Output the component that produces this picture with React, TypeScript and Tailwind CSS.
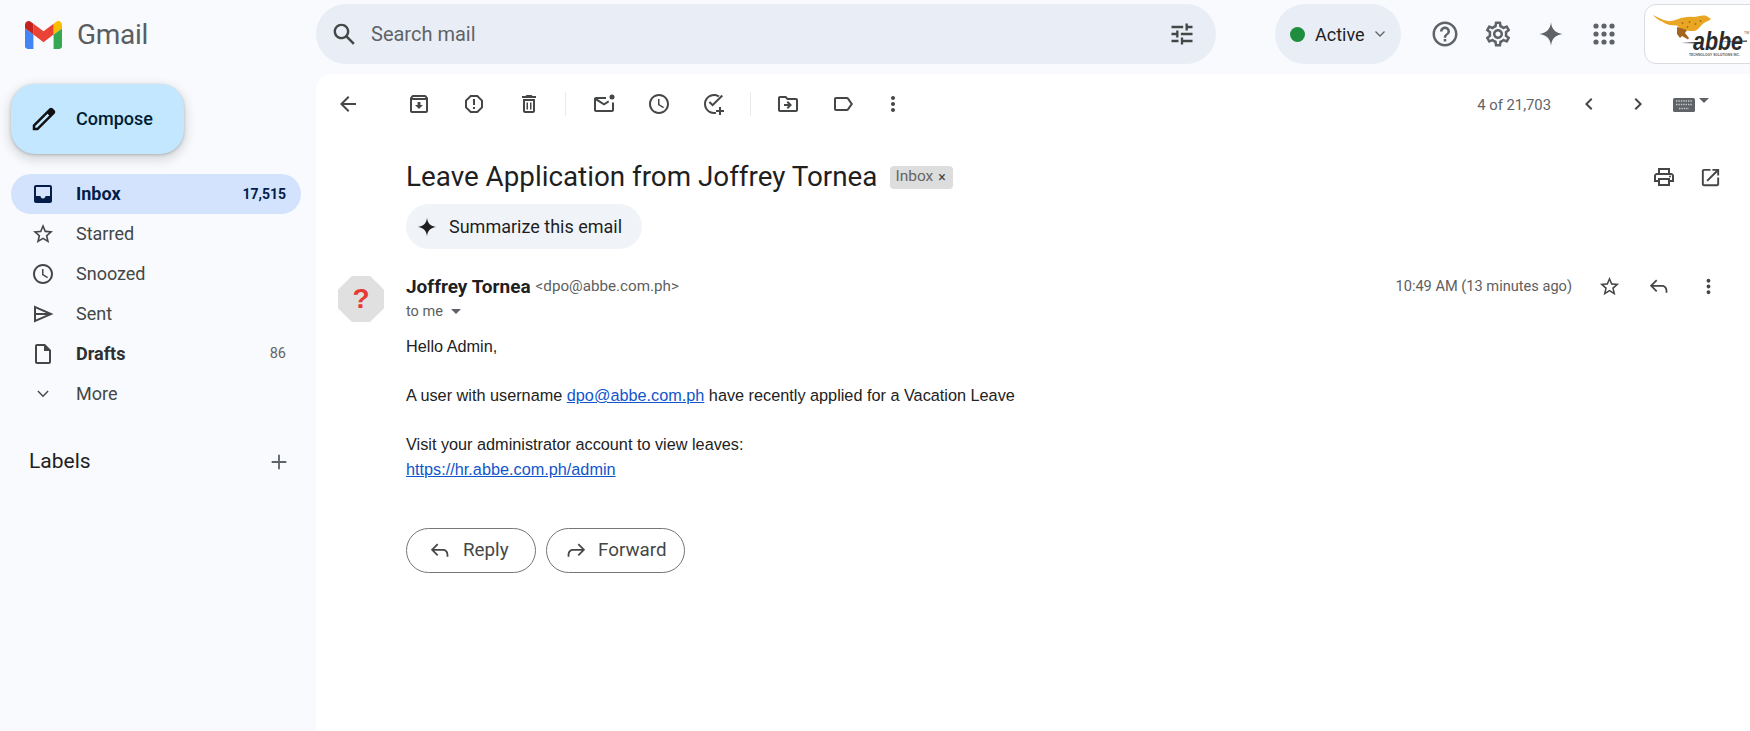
import React from "react";

const roboto = "font-['Roboto',sans-serif]";

function Icon({ d, size = 24, className = "" }: { d: string; size?: number; className?: string }) {
	return (
		<svg width={size} height={size} viewBox="0 0 24 24" fill="currentColor" className={className}>
			<path d={d} />
		</svg>
	);
}

const paths = {
	search: "M20.49 19l-5.73-5.73C15.53 12.2 16 10.91 16 9.5 16 5.91 13.09 3 9.5 3S3 5.91 3 9.5 5.91 16 9.5 16c1.41 0 2.7-.47 3.77-1.24L19 20.49 20.49 19zM5 9.5C5 7.01 7.01 5 9.5 5S14 7.01 14 9.5 11.99 14 9.5 14 5 11.99 5 9.5z",
	tune: "M3 17v2h6v-2H3zM3 5v2h10V5H3zm10 16v-2h8v-2h-8v-2h-2v6h2zM7 9v2H3v2h4v2h2V9H7zm14 4v-2H11v2h10zm-6-4h2V7h4V5h-4V3h-2v6z",
	help: "M11 18h2v-2h-2v2zm1-16C6.48 2 2 6.48 2 12s4.48 10 10 10 10-4.48 10-10S17.52 2 12 2zm0 18c-4.41 0-8-3.59-8-8s3.59-8 8-8 8 3.59 8 8-3.59 8-8 8zm0-14c-2.21 0-4 1.79-4 4h2c0-1.1.9-2 2-2s2 .9 2 2c0 2-3 1.75-3 5h2c0-2.25 3-2.5 3-5 0-2.21-1.79-4-4-4z",
	gear: "M19.43 12.98c.04-.32.07-.64.07-.98 0-.34-.03-.66-.07-.98l2.11-1.65c.19-.15.24-.42.12-.64l-2-3.46c-.09-.16-.26-.25-.44-.25-.06 0-.12.01-.17.03l-2.49 1c-.52-.4-1.08-.73-1.69-.98l-.38-2.65C14.46 2.18 14.25 2 14 2h-4c-.25 0-.46.18-.49.42l-.38 2.65c-.61.25-1.17.59-1.69.98l-2.49-1c-.06-.02-.12-.03-.18-.03-.17 0-.34.09-.43.25l-2 3.46c-.13.22-.07.49.12.64l2.11 1.65c-.04.32-.07.65-.07.98 0 .33.03.66.07.98l-2.11 1.65c-.19.15-.24.42-.12.64l2 3.46c.09.16.26.25.44.25.06 0 .12-.01.17-.03l2.49-1c.52.4 1.08.73 1.69.98l.38 2.65c.03.24.24.42.49.42h4c.25 0 .46-.18.49-.42l.38-2.65c.61-.25 1.17-.59 1.69-.98l2.49 1c.06.02.12.03.18.03.17 0 .34-.09.43-.25l2-3.46c.12-.22.07-.49-.12-.64l-2.11-1.65zm-1.98-1.71c.04.31.05.52.05.73 0 .21-.02.43-.05.73l-.14 1.13.89.7 1.08.84-.7 1.21-1.27-.51-1.04-.42-.9.68c-.43.32-.84.56-1.25.73l-1.06.43-.16 1.13-.2 1.35h-1.4l-.19-1.35-.16-1.13-1.06-.43c-.43-.18-.83-.41-1.23-.71l-.91-.7-1.06.43-1.27.51-.7-1.21 1.08-.84.89-.7-.14-1.13c-.03-.31-.05-.54-.05-.74s.02-.43.05-.73l.14-1.13-.89-.7-1.08-.84.7-1.21 1.27.51 1.04.42.9-.68c.43-.32.84-.56 1.25-.73l1.06-.43.16-1.13.2-1.35h1.39l.19 1.35.16 1.13 1.06.43c.43.18.83.41 1.23.71l.91.7 1.06-.43 1.27-.51.7 1.21-1.07.85-.89.7.14 1.13zM12 8c-2.21 0-4 1.79-4 4s1.79 4 4 4 4-1.79 4-4-1.79-4-4-4zm0 6c-1.1 0-2-.9-2-2s.9-2 2-2 2 .9 2 2-.9 2-2 2z",
	spark: "M12 2C12.6 8 16 11.4 22 12 16 12.6 12.6 16 12 22 11.4 16 8 12.6 2 12 8 11.4 11.4 8 12 2Z",
	back: "M20 11H7.83l5.59-5.59L12 4l-8 8 8 8 1.41-1.41L7.83 13H20v-2z",
	archive: "M20.54 5.23l-1.39-1.68C18.88 3.21 18.47 3 18 3H6c-.47 0-.88.21-1.16.55L3.46 5.23C3.17 5.57 3 6.02 3 6.5V19c0 1.1.9 2 2 2h14c1.1 0 2-.9 2-2V6.5c0-.48-.17-.93-.46-1.27zM6.24 5h11.52l.81.97H5.44l.8-.97zM5 19V8h14v11H5zm8.45-9h-2.9v3H8l4 4 4-4h-2.55z",
	report: "M15.73 3H8.27L3 8.27v7.46L8.27 21h7.46L21 15.73V8.27L15.73 3zM19 14.9L14.9 19H9.1L5 14.9V9.1L9.1 5h5.8L19 9.1v5.8zM11 7h2v6h-2zM11 15h2v2h-2z",
	trash: "M6 19c0 1.1.9 2 2 2h8c1.1 0 2-.9 2-2V7H6v12zM8 9h8v10H8V9zm7.5-5l-1-1h-5l-1 1H5v2h14V4h-3.5zM9.5 10.5h1.5v7H9.5zM13 10.5h1.5v7H13z",
	unread: "M14 5H4c-1.1 0-2 .9-2 2v11c0 1.1.9 2 2 2h16c1.1 0 2-.9 2-2v-7.5h-2V18H4V8.5l8 5 5.2-3.3-1-1.6L12 11.2 5.6 7H14V5zM20 2.5a2.5 2.5 0 1 1 0 5 2.5 2.5 0 0 1 0-5z",
	clock: "M11.99 2C6.47 2 2 6.48 2 12s4.47 10 9.99 10C17.52 22 22 17.52 22 12S17.52 2 11.99 2zM12 20c-4.42 0-8-3.58-8-8s3.58-8 8-8 8 3.58 8 8-3.58 8-8 8zM12.5 7H11v6l5.25 3.15.75-1.23-4.5-2.67z",
	task: "M21 4.2L10.6 14.6l-3.9-3.9 1.4-1.4 2.5 2.5 9-9L21 4.2zM12 20c-4.42 0-8-3.58-8-8s3.58-8 8-8c1.5 0 2.9.42 4.1 1.14l1.45-1.45C16 2.63 14.08 2 12 2 6.48 2 2 6.48 2 12s4.48 10 10 10c.7 0 1.38-.07 2-.2v-2.07c-.63.17-1.3.27-2 .27zM19 15h-2v3h-3v2h3v3h2v-3h3v-2h-3v-3z",
	folder: "M20 6h-8l-2-2H4c-1.1 0-1.99.9-1.99 2L2 18c0 1.1.9 2 2 2h16c1.1 0 2-.9 2-2V8c0-1.1-.9-2-2-2zm0 12H4V6h5.17l2 2H20v10zM12.16 12H8v2h4.16l-1.59 1.59L11.99 17 16 13l-4.01-4-1.42 1.41z",
	label: "M17.63 5.84C17.27 5.33 16.67 5 16 5L5 5.01C3.9 5.01 3 5.9 3 7v10c0 1.1.9 1.99 2 1.99L16 19c.67 0 1.27-.33 1.63-.84L22 12l-4.37-6.16zM16 17H5V7h11l3.55 5L16 17z",
	more: "M12 8c1.1 0 2-.9 2-2s-.9-2-2-2-2 .9-2 2 .9 2 2 2zm0 2c-1.1 0-2 .9-2 2s.9 2 2 2 2-.9 2-2-.9-2-2-2zm0 6c-1.1 0-2 .9-2 2s.9 2 2 2 2-.9 2-2-.9-2-2-2z",
	print: "M19 8h-1V3H6v5H5c-1.66 0-3 1.34-3 3v6h4v4h12v-4h4v-6c0-1.66-1.34-3-3-3zM8 5h8v3H8V5zm8 12v2H8v-4h8v2zm2-2v-2H6v2H4v-4c0-.55.45-1 1-1h14c.55 0 1 .45 1 1v4h-2zM18 10.5a1 1 0 1 1 0 2 1 1 0 0 1 0-2z",
	open: "M19 19H5V5h7V3H5c-1.11 0-2 .9-2 2v14c0 1.1.89 2 2 2h14c1.1 0 2-.9 2-2v-7h-2v7zM14 3v2h3.59l-9.83 9.83 1.41 1.41L19 6.41V10h2V3h-7z",
	prev: "M15.41 7.41L14 6l-6 6 6 6 1.41-1.41L10.83 12z",
	next: "M10 6L8.59 7.41 13.17 12l-4.58 4.59L10 18l6-6z",
	star: "M22 9.24l-7.19-.62L12 2 9.19 8.63 2 9.24l5.46 4.73L5.82 21 12 17.27 18.18 21l-1.63-7.03L22 9.24zM12 15.4l-3.76 2.27 1-4.28-3.32-2.88 4.38-.38L12 6.1l1.71 4.04 4.38.38-3.32 2.88 1 4.28L12 15.4z",
	inbox: "M19 3H5c-1.1 0-2 .9-2 2v14c0 1.1.9 2 2 2h14c1.1 0 2-.9 2-2V5c0-1.1-.9-2-2-2zm0 11h-4.5c0 1.4-1.1 2.5-2.5 2.5S9.5 15.4 9.5 14H5V5h14v9z",
	draft: "M14 2H6c-1.1 0-2 .9-2 2v16c0 1.1.9 2 2 2h12c1.1 0 2-.9 2-2V8l-6-6zM6 20V4h7v5h5v11H6z",
	plus: "M20 13h-7v7h-2v-7H4v-2h7V4h2v7h7v2z",
	pencil: "M20.41 4.94l-1.35-1.35c-.78-.78-2.05-.78-2.83 0L3 16.82V21h4.18L20.41 7.77c.79-.78.79-2.05 0-2.83zm-14 14.12L5 19v-1.36l9.82-9.82 1.41 1.41-9.82 9.83z",
	reply: "M9.5 5.5 3.8 11.2l5.7 5.7-1.4 1.4L1 11.2 8.1 4.1l1.4 1.4zM3 10.2h12c3.6 0 6 2.8 6 6.8v2h-2v-2c0-2.9-1.6-4.8-4-4.8H3v-2z",
	forward: "M14.5 5.5l5.7 5.7-5.7 5.7 1.4 1.4 7.1-7.1-7.1-7.1-1.4 1.4zM21 10.2H9c-3.6 0-6 2.8-6 6.8v2h2v-2c0-2.9 1.6-4.8 4-4.8h12v-2z",
	send: "M3 3.5 22.5 12 3 20.5V3.5zM5 6.6v4.4h10.2L5 6.6zm0 6.4v4.4L15.2 13H5z",
};

function GmailLogo() {
	return (
		<svg width="37" height="28" viewBox="52 42 88 66">
			<path fill="#4285f4" d="M58 108h14V74L52 59v43c0 3.32 2.69 6 6 6" />
			<path fill="#34a853" d="M120 108h14c3.32 0 6-2.69 6-6V59l-20 15" />
			<path fill="#fbbc04" d="M120 48v26l20-15v-8c0-7.42-8.47-11.65-14.4-7.2" />
			<path fill="#ea4335" d="M72 74V48l24 18 24-18v26L96 92" />
			<path fill="#c5221f" d="M52 51v8l20 15V48l-5.6-4.2c-5.94-4.45-14.4-.22-14.4 7.2" />
		</svg>
	);
}

// cheetah + wordmark, the box runs on past the right edge of the window
function AbbeLogo() {
	return (
		<svg width="105" height="58" viewBox="0 0 105 58">
			<path
				fill="#e9a623"
				d="M8 10c5 2 9 5 15 6 3 .5 6-.5 9-1.500 5-2 11-3 16-2.500 4 0 8-2 12-1.500 2 .5 4 2 6 3.500-2 2-5 2.500-7 4-3 2-5 6-8 7.500-3 1-6 .5-9 0l-4 2c-2-3-4-5-6-7-6 0-11-1-15-4C13 15 10 12 8 10z"
			/>
			<path fill="#a5651c" d="M32 22l7 2 3 1-2 3 4 5-1 1.500-6-3.500-2 2-3-4z" />
			<path fill="#a5651c" d="M37 17l1.500.5-.5 1.500-1.500-.5zM44 16l1.500.5-.5 1.500-1.500-.5zM50 18l1.500.5-.5 1.500-1.500-.5zM42 21l1.500.5-.5 1.500-1.500-.5zM55 15l1.500.5-.5 1.500-1.500-.5z" />
			<text x="48" y="45" fontFamily="Liberation Sans, sans-serif" fontSize="26" fontStyle="italic" fontWeight="700" fill="#2b2b2b" textLength="50" lengthAdjust="spacingAndGlyphs">abbe</text>
			<path fill="#2b2b2b" d="M36 38l20-1.200v1.800zM72 36.500l30-1v1.200z" />
			<text x="44" y="50.500" fontFamily="Liberation Sans, sans-serif" fontSize="3.200" fontWeight="700" fill="#555" textLength="51">TECHNOLOGY SOLUTIONS INC.</text>
			<text x="99" y="29" fontFamily="Liberation Sans, sans-serif" fontSize="3.500" fill="#555">TM</text>
		</svg>
	);
}

function Header() {
	return (
		<header className="flex h-[74px] shrink-0 items-start">
			<div className="flex h-[70px] w-[316px] shrink-0 items-center pl-[25px]">
				<GmailLogo />
				<span className="ml-[15px] text-[28px] leading-none tracking-[-0.3px] text-[#5a5e62]">Gmail</span>
			</div>
			<div className="mt-1 flex h-[60px] w-[900px] shrink-0 items-center rounded-full bg-[#e9eef6] text-[#444746]">
				<Icon d={paths.search} size={29} className="ml-[14px]" />
				<span className="ml-[12px] text-[20px] text-[#5f6368]">Search mail</span>
				<Icon d={paths.tune} size={28} className="ml-auto mr-[20px]" />
			</div>
			<div className="ml-[59px] mt-1 flex h-[60px] w-[126px] shrink-0 items-center rounded-full bg-[#e9eef6]">
				<span className="ml-[15px] h-[15px] w-[15px] rounded-full bg-[#1e8e3e]" />
				<span className="ml-[10px] text-[18px] font-normal text-[#1f1f1f]">Active</span>
				<svg width="12" height="8" viewBox="0 0 12 8" fill="none" stroke="#5f6368" strokeWidth="1.3" className="ml-[9px]">
					<path d="M1.500 1.500 6 6l4.500-4.500" />
				</svg>
			</div>
			<div className="ml-[17px] mt-1 flex h-[60px] shrink-0 items-center text-[#5f6368]">
				<span className="flex w-[53px] justify-center"><Icon d={paths.help} size={30} /></span>
				<span className="flex w-[53px] justify-center"><Icon d={paths.gear} size={30} /></span>
				<span className="flex w-[53px] justify-center"><Icon d={paths.spark} size={28} /></span>
				<span className="flex w-[53px] justify-center">
					<svg width="22" height="22" viewBox="0 0 22 22" fill="currentColor">
						{[3, 11, 19].map((y) =>
							[3, 11, 19].map((x) => <circle key={`${x}-${y}`} cx={x} cy={y} r="2.600" />),
						)}
					</svg>
				</span>
			</div>
			<div className="ml-[14px] mt-1 h-[60px] w-[130px] shrink-0 rounded-[12px] border border-[#dadce0] bg-white">
				<AbbeLogo />
			</div>
		</header>
	);
}

const NAV = [
	{ label: "Inbox", icon: paths.inbox, count: "17,515", active: true },
	{ label: "Starred", icon: paths.star },
	{ label: "Snoozed", icon: paths.clock },
	{ label: "Sent", icon: paths.send },
	{ label: "Drafts", icon: paths.draft, count: "86", bold: true },
	{ label: "More", icon: "M7.400 8.600 12 13.200l4.600-4.600 1 1L12 15.200 6.400 9.600z" },
];

function Sidebar() {
	return (
		<aside className="w-[316px] shrink-0">
			<div className="ml-[11px] mt-[10px] flex h-[70px] w-[173px] items-center rounded-[24px] bg-[#c2e7ff] shadow-[0_1px_3px_rgba(60,64,67,0.3),0_4px_10px_3px_rgba(60,64,67,0.15)]">
				<Icon d={paths.pencil} size={30} className="ml-[18px] text-[#111]" />
				<span className="ml-[17px] -mt-[1px] text-[18px] font-medium text-[#001d35]">Compose</span>
			</div>
			<nav className="mt-5 ml-[11px] w-[290px]">
				{NAV.map((item) => (
					<div
						key={item.label}
						className={
							item.active
								? "flex h-10 items-center rounded-full bg-[#d3e3fd] text-[#041e49]"
								: "flex h-10 items-center text-[#444746]"
						}
					>
						<Icon d={item.icon} size={24} className="ml-5" />
						<span
							className={
								item.active
									? "ml-[21px] -mt-[1px] text-[18px] font-bold"
									: item.bold
										? "ml-[21px] -mt-[1px] text-[18px] font-bold text-[#2d2f31]"
										: "ml-[21px] -mt-[1px] text-[18px]"
							}
						>
							{item.label}
						</span>
						{item.count && (
							<span
								className={
									item.active
										? "ml-auto mr-[15px] text-[14px] font-bold"
										: "ml-auto mr-[15px] text-[14.5px] text-[#666]"
								}
							>
								{item.count}
							</span>
						)}
					</div>
				))}
			</nav>
			<div className="ml-[29px] mt-[34px] flex h-7 w-[261px] items-center justify-between">
				<span className="text-[21px] text-[#1f1f1f]">Labels</span>
				<Icon d={paths.plus} size={22} className="text-[#5f6368]" />
			</div>
		</aside>
	);
}

function ToolButton({ d, className = "w-[55px]" }: { d: string; className?: string }) {
	return (
		<span className={`flex h-10 shrink-0 items-center justify-center ${className}`}>
			<Icon d={d} size={24} />
		</span>
	);
}

function Toolbar() {
	return (
		<div className="flex h-[60px] items-center text-[#444746]">
			<ToolButton d={paths.back} className="w-[64px]" />
			<span className="w-[11px] shrink-0" />
			<ToolButton d={paths.archive} />
			<ToolButton d={paths.report} />
			<ToolButton d={paths.trash} />
			<span className="ml-[9px] h-6 w-px shrink-0 bg-[#e8eaed]" />
			<span className="w-[10px] shrink-0" />
			<ToolButton d={paths.unread} />
			<ToolButton d={paths.clock} />
			<ToolButton d={paths.task} />
			<span className="ml-[9px] h-6 w-px shrink-0 bg-[#e8eaed]" />
			<span className="w-[9px] shrink-0" />
			<ToolButton d={paths.folder} />
			<ToolButton d={paths.label} />
			<ToolButton d={paths.more} className="w-[45px]" />
			<span className="ml-auto pt-[2px] text-[14.8px] text-[#5f6368]">4 of 21,703</span>
			<Icon d={paths.prev} size={24} className="ml-[26px]" />
			<Icon d={paths.next} size={24} className="ml-[25px]" />
			<svg width="22" height="14" viewBox="0 0 22 14" className="ml-[23px] mt-[2px]">
				<rect width="22" height="14" rx="1.500" fill="#5f6368" />
				<path d="M3 3h16M3 6.500h16M6 10.500h10" stroke="#c8cacc" strokeWidth="1.400" strokeDasharray="1.400 1" />
			</svg>
			<svg width="10" height="5" viewBox="0 0 10 5" className="ml-[4px] mr-[41px] -mt-2" fill="#5f6368">
				<path d="M0 0h10L5 5z" />
			</svg>
		</div>
	);
}

function MessageHeader() {
	return (
		<div className="mt-[27px] flex">
			<div className="ml-[22px] flex h-[46px] w-[46px] shrink-0 items-center justify-center bg-[#e0e0e0] [clip-path:polygon(30%_0,70%_0,100%_30%,100%_70%,70%_100%,30%_100%,0_70%,0_30%)]">
				<span className="font-['Liberation_Sans',sans-serif] text-[28px] font-bold leading-none text-[#e53935]">?</span>
			</div>
			<div className="ml-[22px] flex-1">
				<div className="flex h-5 items-center pt-[1px]">
					<span className="text-[19px] font-bold leading-none text-[#1f1f1f]">Joffrey Tornea</span>
					<span className="ml-[5px] text-[15.2px] text-[#5e5e5e]">&lt;dpo@abbe.com.ph&gt;</span>
					<span className="ml-auto text-[14.6px] text-[#5e5e5e]">10:49 AM (13 minutes ago)</span>
					<Icon d={paths.star} size={23} className="ml-[26px] text-[#444746]" />
					<Icon d={paths.reply} size={21} className="ml-[28px] text-[#444746]" />
					<Icon d={paths.more} size={23} className="ml-[27px] mr-[30px] text-[#444746]" />
				</div>
				<div className="mt-[5px] flex h-5 items-center pt-[1px] text-[#5e5e5e]">
					<span className="text-[14.5px]">to me</span>
					<svg width="10" height="5" viewBox="0 0 10 5" fill="#5f6368" className="ml-[8px]">
						<path d="M0 0h10L5 5z" />
					</svg>
				</div>
			</div>
		</div>
	);
}

function MessageBody() {
	return (
		<div className="ml-[90px] mt-[12px] font-['Liberation_Sans',sans-serif] text-[16.25px] leading-[24.5px] text-[#222]">
			<p>Hello Admin,</p>
			<p>&nbsp;</p>
			<p>
				A user with username{" "}
				<a href="#mail" className="text-[#1155cc] underline">dpo@abbe.com.ph</a>{" "}
				have recently applied for a Vacation Leave
			</p>
			<p>&nbsp;</p>
			<p>Visit your administrator account to view leaves:</p>
			<p>
				<a href="#admin" className="text-[#1155cc] underline">https://hr.abbe.com.ph/admin</a>
			</p>
		</div>
	);
}

function ActionButton({ d, label, className, iconClass }: { d: string; label: string; className: string; iconClass: string }) {
	return (
		<button className={`flex h-[45px] items-center rounded-full border border-[#747775] text-[#444746] ${className}`}>
			<Icon d={d} size={21} className={iconClass} />
			<span className="ml-[12px] text-[18.8px] font-normal">{label}</span>
		</button>
	);
}

export default function App() {
	return (
		<div className={`flex h-screen w-full flex-col overflow-hidden bg-[#f8fafd] ${roboto}`}>
			<Header />
			<div className="flex min-h-0 flex-1">
				<Sidebar />
				<main className="flex-1 rounded-tl-2xl bg-white">
					<Toolbar />
					<div className="ml-[90px] mt-[18px] flex h-[50px] items-center">
						<h1 className="text-[27.8px] font-normal leading-none text-[#1f1f1f]">Leave Application from Joffrey Tornea</h1>
						<span className="ml-[13px] flex h-[23px] w-[63px] items-center rounded-[4px] bg-[#dddddd] pl-[5px] text-[15.5px] text-[#666]">
							Inbox
							<span className="ml-[5px] text-[14px] leading-none text-[#444]">×</span>
						</span>
						<Icon d={paths.print} size={24} className="ml-auto text-[#444746]" />
						<Icon d={paths.open} size={23} className="ml-[23px] mr-[28px] text-[#444746]" />
					</div>
					<div className="ml-[90px] mt-[2px] flex h-[45px] w-[236px] items-center rounded-full bg-[#f0f4f9]">
						<Icon d={paths.spark} size={22} className="ml-[10px] text-[#1f1f1f]" />
						<span className="ml-[11px] text-[18px] font-normal text-[#1f1f1f]">Summarize this email</span>
					</div>
					<MessageHeader />
					<MessageBody />
					<div className="ml-[90px] mt-[47px] flex gap-[10px]">
						<ActionButton d={paths.reply} label="Reply" className="w-[130px]" iconClass="ml-[23px]" />
						<ActionButton d={paths.forward} label="Forward" className="w-[139px]" iconClass="ml-[18px]" />
					</div>
				</main>
			</div>
		</div>
	);
}
